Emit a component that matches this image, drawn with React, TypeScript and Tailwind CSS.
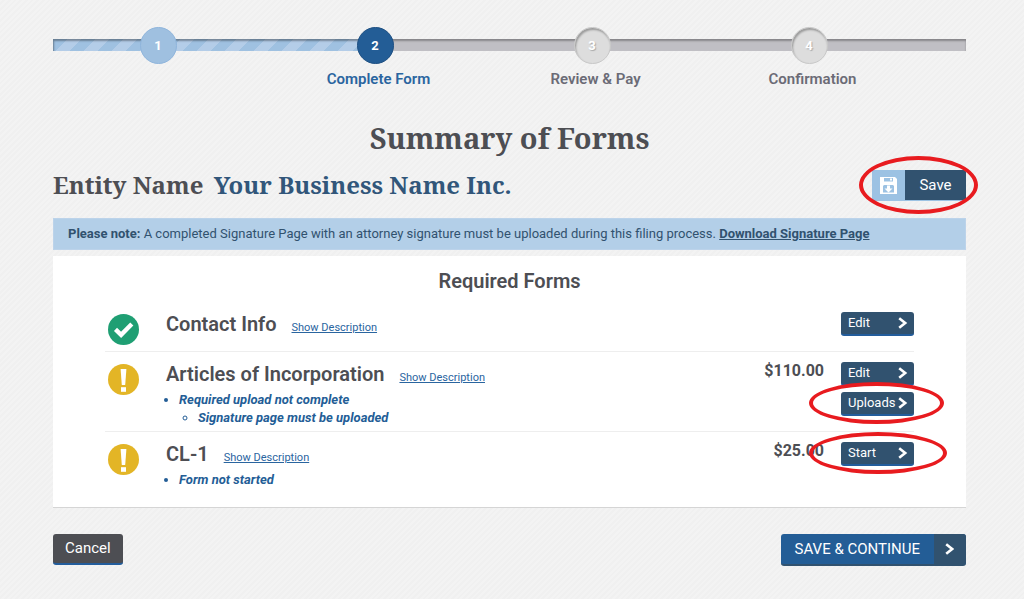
/**
 * Summary of Forms
 * Step 2 of the filing wizard: lists the required forms and their status
 */

const steps = [
  { number: 1, label: "", state: "done" },
  { number: 2, label: "Complete Form", state: "current" },
  { number: 3, label: "Review & Pay", state: "upcoming" },
  { number: 4, label: "Confirmation", state: "upcoming" },
];

const circleStyles: Record<string, string> = {
  done: "bg-[#9fc0e0] border border-[#8fb5dc] text-white",
  current: "bg-[#235d96] border border-[#1d4f82] text-white",
  upcoming:
    "bg-[#dddddd] border border-[#c8c8c8] text-white shadow-[inset_1px_2px_2px_rgba(0,0,0,0.3)] [text-shadow:1px_1px_1px_#aaaaaa]",
};

function CheckIcon() {
  return (
    <svg viewBox="0 0 31 31" className="size-[31px]" role="img" aria-label="Complete">
      <circle cx="15.5" cy="15.5" r="15.5" fill="#1f9f73" />
      <path d="M7.5 15.4l5.6 5.4L23.8 10" fill="none" stroke="#fff" strokeWidth="4.4" />
    </svg>
  );
}

function WarningIcon() {
  return (
    <svg viewBox="0 0 31 31" className="size-[31px]" role="img" aria-label="Incomplete">
      <circle cx="15.5" cy="15.5" r="15.5" fill="#e3b526" />
      <path d="M12.6 5h5.8l-1.2 16h-3.4z" fill="#fff" />
      <path d="M13 23.2h5v4.6h-5z" fill="#fff" />
    </svg>
  );
}

function Chevron() {
  return (
    <svg viewBox="0 0 10 12" className="h-3 w-[10px]" aria-hidden="true">
      <path d="M1.2 1.2L7.2 6l-6 4.8" fill="none" stroke="#fff" strokeWidth="2.6" />
    </svg>
  );
}

function DiskIcon() {
  return (
    <svg viewBox="0 0 17 17" className="size-[17px]" aria-hidden="true">
      <path d="M0 0h15l2 2v15H0z" fill="#fff" />
      <path d="M4 1h9v3.5H4z" fill="#9cc2e3" />
      <path d="M10 1.5h2v2h-2z" fill="#fff" />
      <path d="M4 8h9l1 1v6.5H3V9z" fill="#9cc2e3" />
      <path d="M7 8.5h3v3h2.5l-4 4-4-4H7z" fill="#fff" />
    </svg>
  );
}

function RowButton({ label, highlight }: { label: string; highlight?: string }) {
  return (
    <button
      type="button"
      className="relative flex h-6 w-[73px] items-center justify-between rounded-[3px] border-b-2 border-[#235d9c] bg-[#31526f] pr-[6px] pl-[7px] text-[13px] text-white"
    >
      {label}
      <Chevron />
      {highlight && (
        <span
          className={`pointer-events-none absolute rounded-[50%] border-4 border-[#e81b1f] ${highlight}`}
        />
      )}
    </button>
  );
}

function ShowDescription() {
  return (
    <a href="#" className="ml-[15px] text-[11px] text-[#2a659f] underline">
      Show Description
    </a>
  );
}

export default function App() {
  return (
    <div className="min-h-screen bg-[#f2f2f2] bg-[repeating-linear-gradient(135deg,#f3f3f3_0_2px,#f0f0f0_2px_4px)] pt-[27px] pr-[58px] pb-[34px] pl-[53px] font-['Roboto',sans-serif] text-[#4d4e53]">
      {/* Progress */}
      <nav aria-label="Progress" className="grid">
        <div className="mt-3 h-3 bg-[#c0bfc4] shadow-[inset_0_2px_2px_rgba(0,0,0,0.3)] [grid-area:1/1]">
          <div className="h-full w-[36%] bg-[repeating-linear-gradient(135deg,#9fc1e1_0_10px,#b4cde8_10px_20px)] shadow-[inset_1px_2px_2px_rgba(0,0,0,0.35)]" />
        </div>
        <ol className="grid grid-cols-4 pr-[45px] [grid-area:1/1]">
          {steps.map((step) => (
            <li key={step.number} className="flex flex-col items-center">
              <div className="pr-[7px]">
                <span
                  className={`flex size-[37px] items-center justify-center rounded-full text-[13px] font-bold ${circleStyles[step.state]}`}
                >
                  {step.number}
                </span>
              </div>
              <span
                className={`mt-[5px] text-[15px] leading-5 font-semibold ${
                  step.state === "current" ? "text-[#2a659f]" : "text-[#6b6b76]"
                }`}
              >
                {step.label}
              </span>
            </li>
          ))}
        </ol>
      </nav>

      {/* Titles */}
      <h1 className="mt-[29px] text-center font-['Noto_Serif','Droid_Serif','DejaVu_Serif',serif] text-[29px] leading-10 font-bold">
        Summary of Forms
      </h1>
      <div className="mt-3 flex h-[31px] items-center justify-between">
        <h2 className="pb-[3px] font-['Noto_Serif','Droid_Serif','DejaVu_Serif',serif] text-2xl leading-[31px] font-bold">
          Entity Name <span className="ml-1 text-[#31567a]">Your Business Name Inc.</span>
        </h2>
        <button
          type="button"
          className="relative flex h-[31px] rounded-[2px] border-b border-[#9cc2e3] bg-[#31526f] text-[15px] text-white"
        >
          <span className="flex h-full w-[33px] items-center justify-center bg-[#9cc2e3]">
            <DiskIcon />
          </span>
          <span className="flex h-full w-[61px] items-center justify-center">Save</span>
          <span className="pointer-events-none absolute -top-[14px] -right-3 -bottom-[14px] -left-[13px] rounded-[50%] border-4 border-[#e81b1f]" />
        </button>
      </div>

      {/* Note */}
      <p className="mt-[17px] border border-[#bcd3ea] bg-[#b3cfe8] px-[14px] py-[5px] text-[13px] leading-5 text-[#31526f]">
        <strong>Please note:</strong> A completed Signature Page with an attorney signature must be
        uploaded during this filing process.{" "}
        <a href="#" className="font-bold underline">
          Download Signature Page
        </a>
      </p>

      {/* Required forms */}
      <section className="mt-[6px] border-b border-[#d5d5d5] bg-white px-[52px] pt-3 pb-[13px]">
        <h2 className="text-center text-[20px] leading-[26px] font-semibold">Required Forms</h2>
        <ul className="mt-2 divide-y divide-[#eeeeee]">
          <li className="flex items-start pb-[6px] pl-[3px]">
            <div className="w-[58px] pt-3">
              <CheckIcon />
            </div>
            <div className="flex-1 pt-[9px]">
              <h3 className="inline text-[20px] leading-[26px] font-semibold">Contact Info</h3>
              <ShowDescription />
            </div>
            <div className="pt-[10px]">
              <RowButton label="Edit" />
            </div>
          </li>

          <li className="flex items-start pb-1 pl-[3px]">
            <div className="w-[58px] pt-3">
              <WarningIcon />
            </div>
            <div className="flex-1 pt-[9px]">
              <h3 className="inline text-[20px] leading-[26px] font-semibold">
                Articles of Incorporation
              </h3>
              <ShowDescription />
              <ul className="mt-[3px] list-disc pl-[13px] text-[13px] leading-[18px] font-bold text-[#235d96] italic">
                <li>
                  Required upload not complete
                  <ul className="list-[circle] pl-[19px]">
                    <li>Signature page must be uploaded</li>
                  </ul>
                </li>
              </ul>
            </div>
            <span className="mr-[17px] pt-[7px] text-base font-bold">$110.00</span>
            <div className="flex flex-col gap-[6px] pt-[10px]">
              <RowButton label="Edit" />
              <RowButton label="Uploads" highlight="-top-[10px] -right-[30px] -bottom-[10px] -left-8" />
            </div>
          </li>

          <li className="flex items-start pb-[5px] pl-[3px]">
            <div className="w-[58px] pt-3">
              <WarningIcon />
            </div>
            <div className="flex-1 pt-[9px]">
              <h3 className="inline text-[20px] leading-[26px] font-semibold">CL-1</h3>
              <ShowDescription />
              <ul className="mt-[3px] list-disc pl-[13px] text-[13px] leading-[18px] font-bold text-[#235d96] italic">
                <li>Form not started</li>
              </ul>
            </div>
            <span className="mr-[17px] pt-[7px] text-base font-bold">$25.00</span>
            <div className="pt-[10px]">
              <RowButton label="Start" highlight="-top-[10px] -right-[33px] -bottom-[10px] -left-8" />
            </div>
          </li>
        </ul>
      </section>

      {/* Actions */}
      <div className="mt-[26px] flex items-start justify-between">
        <button
          type="button"
          className="h-[31px] rounded-[3px] border-b-2 border-[#235d9c] bg-[#4d4e53] px-3 text-[15px] text-white"
        >
          Cancel
        </button>
        <button
          type="button"
          className="flex h-8 overflow-hidden rounded-[3px] border-b-2 border-[#31526f] bg-[#235d96] text-[15px] text-white"
        >
          <span className="flex h-full items-center px-[14px]">SAVE &amp; CONTINUE</span>
          <span className="flex h-full w-8 items-center justify-center bg-[#31526f]">
            <Chevron />
          </span>
        </button>
      </div>
    </div>
  );
}
